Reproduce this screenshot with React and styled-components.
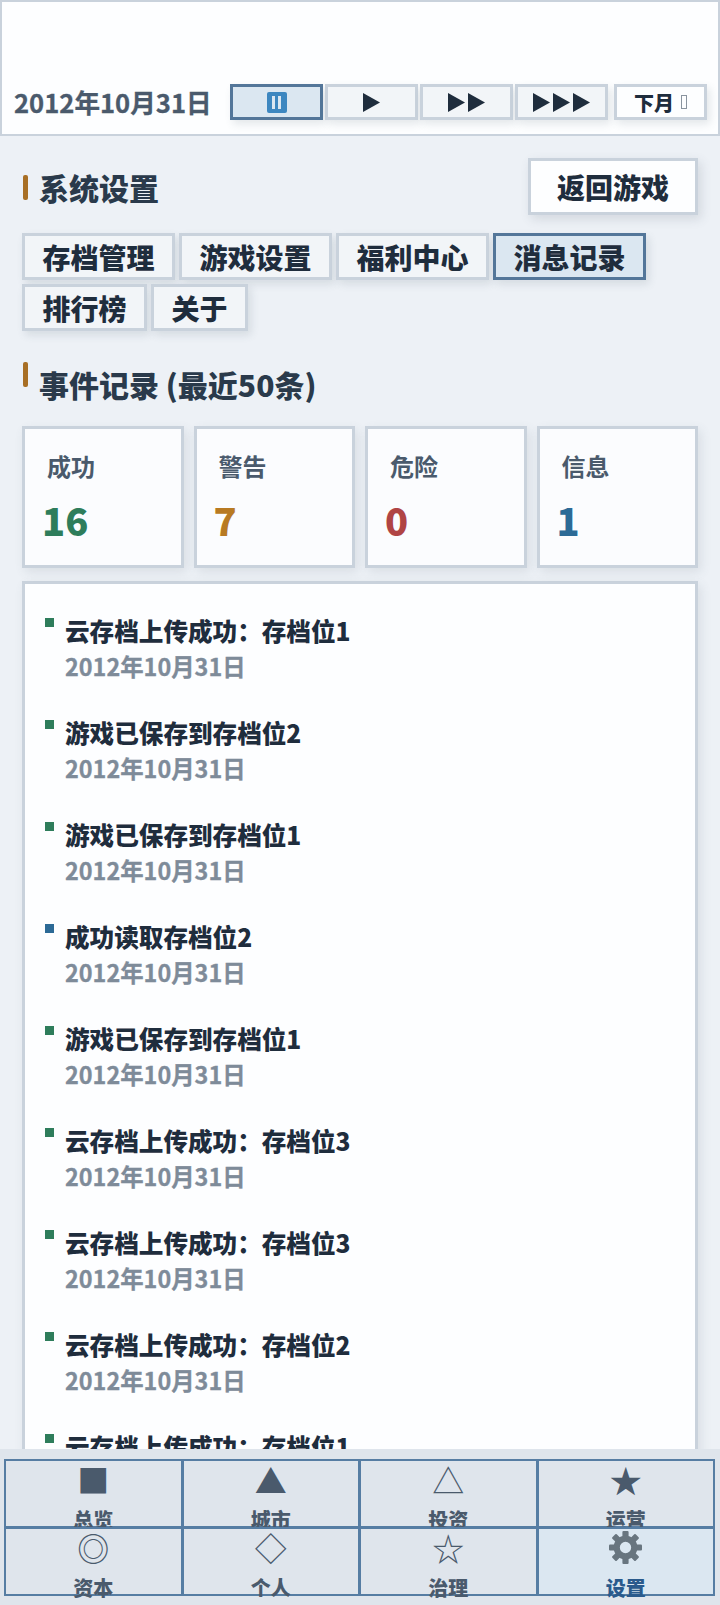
import React from 'react';
import styled, { createGlobalStyle } from 'styled-components';

const Global = createGlobalStyle`
  html, body { margin: 0; padding: 0; height: 100%; overflow: hidden; }
  body { background: #edf1f6; color: #1f2d3d; font-family: "Noto Sans CJK SC", "Noto Sans", sans-serif; }
  * { box-sizing: border-box; }
`;
const Page = styled.div`height: 1605px; overflow: hidden; position: relative;`;
const Header = styled.header`
  height: 136px; background: #fdfeff; border: 2px solid #c9d2dc;
  display: flex; align-items: flex-end; padding: 0 11px 14px 12px;
`;
const DateText = styled.div`font-size: 25.6px; font-weight: 700; -webkit-text-stroke: 0.3px currentColor; color: #4a5a6c; line-height: 36px; width: 216px; white-space: nowrap;`;
const Speeds = styled.div`display: flex; gap: 2px; margin-right: 6px;`;
const SpeedButton = styled.button`
  width: 93px; height: 36px; padding: 0; display: flex; align-items: center; justify-content: center;
  background: ${p => p.$active ? '#dbe7f1' : '#f2f5f8'};
  border: 3px solid ${p => p.$active ? '#537699' : '#c9d2dc'};
  box-shadow: 3px 4px 8px rgba(74,90,108,.14);
`;
const PauseIcon = styled.span`
  width: 20px; height: 21px; background: #3d87c0; border-radius: 2px; display: flex; align-items: center; justify-content: center; gap: 3px;
  & > i { display: block; width: 3px; height: 13px; background: #dbe7f1; }
`;
const NextMonth = styled.button`
  width: 93px; height: 36px; padding: 0; background: #fdfeff; border: 3px solid #c9d2dc; box-shadow: 3px 4px 8px rgba(74,90,108,.14);
  font: 900 20px "Noto Sans CJK SC", sans-serif; color: #1f2d3d; display: flex; align-items: center; justify-content: center; gap: 7px;
`;
const Tofu = styled.span`width: 6px; height: 14px; border: 1px solid #8a949f;`;
const Main = styled.main`padding: 22px 22px 0;`;
const TopRow = styled.div`display: flex; justify-content: space-between; align-items: flex-start;`;
const Title = styled.h2`
  margin: 0; font-size: 30px; font-weight: 900; color: #2a3a4b; line-height: ${p => p.$lh}px; padding-left: 17px; position: relative;
  &::before { content: ""; position: absolute; left: 1px; top: ${p => p.$top}px; width: 5px; height: 25px; background: #a86f25; border-radius: 2px; }
`;
const BackButton = styled.button`
  width: 170px; height: 57px; background: #fdfeff; border: 3px solid #c9d2dc; box-shadow: 3px 4px 10px rgba(74,90,108,.16);
  font: 900 28px "Noto Sans CJK SC", sans-serif; color: #1f2d3d; padding: 0;
`;
const Tabs = styled.div`display: flex; flex-wrap: wrap; gap: 4px; margin-top: 16px; width: 640px;`;
const Tab = styled.button`
  height: 47px; padding: 0 17.5px; background: ${p => p.$active ? '#dbe7f1' : '#f2f5f8'};
  border: 3px solid ${p => p.$active ? '#537699' : '#c9d2dc'}; box-shadow: 3px 4px 8px rgba(74,90,108,.14);
  font: 900 28px "Noto Sans CJK SC", sans-serif; color: #1f2d3d;
`;
const SectionTitle = styled(Title)`margin-top: 31px;`;
const Stats = styled.div`display: grid; grid-template-columns: repeat(4, 1fr); gap: 10px; margin-top: 20px;`;
const Stat = styled.div`
  height: 142px; background: #fbfcfe; border: 3px solid #c9d2dc; box-shadow: 3px 4px 10px rgba(74,90,108,.12); padding: 20px;
`;
const StatLabel = styled.div`font-size: 24px; font-weight: 700; color: #4a5a6c; line-height: 34px; padding-left: 2px;`;
const StatValue = styled.div`font-size: 38px; font-weight: 900; color: ${p => p.$color}; line-height: 54px; margin: 10px 0 0 -3px;`;
const Log = styled.div`
  margin-top: 13px; background: #fdfeff; border: 3px solid #c9d2dc; box-shadow: 3px 4px 10px rgba(74,90,108,.12); padding: 29px 20px;
  display: flex; flex-direction: column;
`;
const Entry = styled.div`display: flex; gap: 11px; height: 102px;`;
const Dot = styled.span`width: 9px; height: 9px; background: ${p => p.$color}; margin-top: 5px; flex: none;`;
const EntryBody = styled.div``;
const EntryText = styled.div`font-size: 24.6px; font-weight: 900; color: #1f2d3d; line-height: 34px;`;
const EntryDate = styled.div`font-size: 23.4px; font-weight: 700; -webkit-text-stroke: 0.3px currentColor; color: #7e8b99; line-height: 35px; margin-top: 2px;`;
const Nav = styled.nav`
  position: absolute; left: 0; right: 0; bottom: 0; height: 156px; background: #dfe5ec; padding: 10px 6px 9px 4px;
  display: grid; grid-template-columns: repeat(4, 1fr); grid-template-rows: repeat(2, 68px);
`;
const NavItem = styled.div`
  border: 2px solid #567da3; margin: 0 -1px -1px 0; background: ${p => p.$active ? '#dbe7f1' : '#dfe5ec'};
  color: ${p => p.$active ? '#2a5a8c' : '#4a5a6c'}; display: flex; flex-direction: column; align-items: center; position: relative;
`;
const NavIcon = styled.div`flex: none; font-size: 32px; font-weight: 400; line-height: 36px; height: 36px; color: #4a5a6c; display: flex; align-items: center; justify-content: center;`;
const NavLabel = styled.div`flex: none; font-size: 20px; font-weight: 900; line-height: 28px; margin-top: 9px;`;

const Gear = () => (
  <svg width="33" height="33" viewBox="0 0 32 32" fill="#68757f" aria-hidden="true">
    {[0,45,90,135,180,225,270,315].map(a => <rect key={a} x="13" y="0" width="6" height="8" rx="1" transform={`rotate(${a} 16 16)`}/>)}
    <circle cx="16" cy="16" r="8.5" fill="none" stroke="#68757f" strokeWidth="6"/>
  </svg>
);
const Tri = ({n}) => (
  <svg width={17+20*(n-1)} height="19" viewBox={`0 0 ${17+20*(n-1)} 19`} style={{display:'block'}} aria-hidden="true">
    {Array.from({length:n}).map((_,i)=><polygon key={i} points={`${i*20},0 ${i*20+17},9.5 ${i*20},19`} fill="#1f2d3d"/>)}
  </svg>
);
const OK = '#2e7d5b';
const INFO = '#2c6a96';
const entries = [
  ['云存档上传成功\uFF1A存档位1',OK],['游戏已保存到存档位2',OK],['游戏已保存到存档位1',OK],
  ['成功读取存档位2',INFO],['游戏已保存到存档位1',OK],['云存档上传成功\uFF1A存档位3',OK],
  ['云存档上传成功\uFF1A存档位3',OK],['云存档上传成功\uFF1A存档位2',OK],['云存档上传成功\uFF1A存档位1',OK],
];
const nav = [['■','总览'],['▲','城市'],['△','投资'],['★','运营'],['◎','资本'],['◇','个人'],['☆','治理'],[<Gear/>,'设置',true]];
export default function App(){
  return <Page><Global/>
    <Header>
      <DateText>2012年10月31日</DateText>
      <Speeds>
        <SpeedButton $active><PauseIcon><i/><i/></PauseIcon></SpeedButton>
        <SpeedButton><Tri n={1}/></SpeedButton>
        <SpeedButton><Tri n={2}/></SpeedButton>
        <SpeedButton><Tri n={3}/></SpeedButton>
      </Speeds>
      <NextMonth>下月<Tofu/></NextMonth>
    </Header>
    <Main>
      <TopRow>
        <Title $top={17} $lh={59}>系统设置</Title>
        <BackButton>返回游戏</BackButton>
      </TopRow>
      <Tabs>
        <Tab>存档管理</Tab><Tab>游戏设置</Tab><Tab>福利中心</Tab><Tab $active>消息记录</Tab><Tab>排行榜</Tab><Tab>关于</Tab>
      </Tabs>
      <SectionTitle $top={0} $lh={44}>事件记录 (最近50条)</SectionTitle>
      <Stats>
        <Stat><StatLabel>成功</StatLabel><StatValue $color="#2e7d5b">16</StatValue></Stat>
        <Stat><StatLabel>警告</StatLabel><StatValue $color="#b87a22">7</StatValue></Stat>
        <Stat><StatLabel>危险</StatLabel><StatValue $color="#b04444">0</StatValue></Stat>
        <Stat><StatLabel>信息</StatLabel><StatValue $color="#2c6a96">1</StatValue></Stat>
      </Stats>
      <Log>
        {entries.map(([t,c],i)=><Entry key={i}><Dot $color={c}/><EntryBody><EntryText>{t}</EntryText><EntryDate>2012年10月31日</EntryDate></EntryBody></Entry>)}
      </Log>
    </Main>
    <Nav>
      {nav.map(([g,l,a])=><NavItem key={l} $active={a}><NavIcon>{g}</NavIcon><NavLabel>{l}</NavLabel></NavItem>)}
    </Nav>
  </Page>;
}
